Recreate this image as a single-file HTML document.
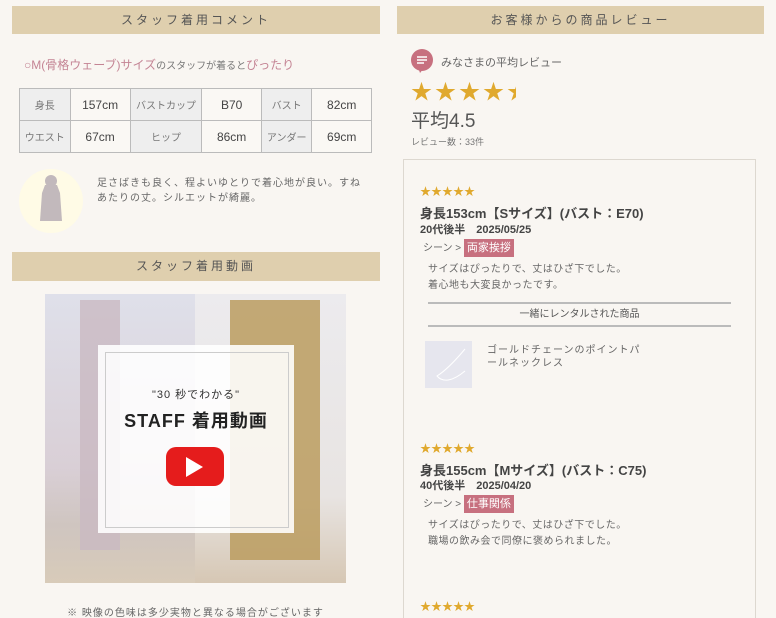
<!DOCTYPE html>
<html style="overflow:hidden;height:618px"><head><meta charset="utf-8"><style>
body{margin:0;width:776px;height:618px;background:#f9f6f2;position:relative;overflow:hidden;font-family:"Liberation Sans","Noto Sans CJK JP",sans-serif;color:#555;}
.a{position:absolute;}
.bar{background:#dfcfae;height:28px;line-height:28px;text-align:center;font-size:12px;letter-spacing:3px;color:#555;}
table{border-collapse:collapse;font-size:10px;}
td{border:1px solid #bbb;text-align:center;height:31px;padding:0;}
td.l{background:#eeeeee;color:#777;width:53px}
td.v{background:#faf8f4;color:#444;width:61px;font-size:12px}
.star{color:#e0a92e}
.tag{background:#c7707f;color:#fff;padding:3px 3px;font-size:11px}
.rt{font-weight:bold;color:#444;font-size:13px}
.sub{font-weight:bold;color:#444;font-size:11px}
.tx{font-size:10px;color:#666;line-height:16px;letter-spacing:.5px}
</style></head><body>
<div class="a bar" style="left:12px;top:6px;width:368px">スタッフ着用コメント</div>
<div class="a bar" style="left:397px;top:6px;width:367px">お客様からの商品レビュー</div>

<div class="a" style="left:24px;top:56px;font-size:12px;color:#c48494">○M(骨格ウェーブ)サイズ<span style="font-size:10px;color:#777">のスタッフが着ると</span>ぴったり</div>
<table class="a" style="left:19px;top:88px;width:353px">
<tr><td class="l">身長</td><td class="v">157cm</td><td class="l" style="width:76px">バストカップ</td><td class="v" style="width:53px">B70</td><td class="l">バスト</td><td class="v" style="width:53px">82cm</td></tr>
<tr><td class="l">ウエスト</td><td class="v">67cm</td><td class="l">ヒップ</td><td class="v">86cm</td><td class="l">アンダー</td><td class="v">69cm</td></tr>
</table>
<div class="a" style="left:19px;top:169px;width:64px;height:64px;border-radius:50%;background:#fffbe6"></div>
<svg class="a" style="left:36px;top:172px" width="30" height="52"><circle cx="15" cy="9" r="6" fill="#c2b9bc"/><path d="M9 13 h12 l3 8 l2 28 h-22 l2-28z" fill="#c2b9bc"/></svg>
<div class="a" style="left:97px;top:176px;width:265px;font-size:10px;color:#666;line-height:15px;letter-spacing:1px">足さばきも良く、程よいゆとりで着心地が良い。すねあたりの丈。シルエットが綺麗。</div>

<div class="a bar" style="left:12px;top:252px;width:368px;height:29px">スタッフ着用動画</div>
<div class="a" style="left:45px;top:294px;width:150px;height:289px;background:linear-gradient(180deg,#dfe0ea,#d9cfd6 60%,#cfc5c0 80%,#d8cbb9)"></div>
<div class="a" style="left:195px;top:294px;width:151px;height:289px;background:linear-gradient(180deg,#ecebee,#e8e4e2 70%,#d6c7b4)"></div>
<div class="a" style="left:230px;top:300px;width:90px;height:260px;background:#bb9c5f;opacity:.85"></div>
<div class="a" style="left:80px;top:300px;width:40px;height:250px;background:#c9b9c2;opacity:.8"></div>
<div class="a" style="left:98px;top:345px;width:196px;height:188px;background:rgba(255,255,255,.88)"></div>
<div class="a" style="left:105px;top:352px;width:182px;height:174px;border:1px solid #ccc"></div>
<div class="a" style="left:98px;top:386px;width:196px;text-align:center;font-size:11px;color:#333;letter-spacing:1px">"30 秒でわかる"</div>
<div class="a" style="left:98px;top:407px;width:196px;text-align:center;font-size:18px;font-weight:bold;color:#222;letter-spacing:1px">STAFF 着用動画</div>
<div class="a" style="left:166px;top:447px;width:58px;height:39px;background:#e51c1c;border-radius:10px"></div>
<svg class="a" style="left:186px;top:457px" width="20" height="20"><path d="M0 0 L17 10 L0 20z" fill="#fff"/></svg>
<div class="a" style="left:45px;top:604px;width:301px;text-align:center;font-size:10px;color:#666;letter-spacing:1px">※ 映像の色味は多少実物と異なる場合がございます</div>

<svg class="a" style="left:410px;top:49px" width="25" height="24"><circle cx="12" cy="11" r="11" fill="#c7707f"/><path d="M8 18 l2 6 l4-5z" fill="#c7707f"/><path d="M7 8h10M7 11h10M7 14h7" stroke="#fff" stroke-width="1.5"/></svg>
<div class="a" style="left:441px;top:54px;font-size:11px;color:#666">みなさまの平均レビュー</div>
<div class="a star" style="left:411px;top:76px;font-size:21px;letter-spacing:3px">★★★★<span style="display:inline-block;width:9px;overflow:hidden;vertical-align:top">★</span></div>
<div class="a" style="left:411px;top:106px;font-size:19px;color:#555">平均4.5</div>
<div class="a" style="left:411px;top:135px;font-size:9px;color:#777">レビュー数：33件</div>

<div class="a" style="left:403px;top:159px;width:351px;height:470px;border:1px solid #ddd8d0;border-bottom:none"></div>
<div class="a star" style="left:420px;top:183px;font-size:11px">★★★★★</div>
<div class="a rt" style="left:420px;top:203px">身長153cm【Sサイズ】(バスト：E70)</div>
<div class="a sub" style="left:420px;top:221px">20代後半　2025/05/25</div>
<div class="a" style="left:423px;top:239px;font-size:10px;color:#666">シーン &gt; <span class="tag">両家挨拶</span></div>
<div class="a tx" style="left:428px;top:262px">サイズはぴったりで、丈はひざ下でした。<br>着心地も大変良かったです。</div>
<div class="a" style="left:428px;top:302px;width:303px;border-top:2px solid #bbb;border-bottom:2px solid #bbb;height:21px;line-height:21px;text-align:center;font-size:10px;color:#555">一緒にレンタルされた商品</div>
<div class="a" style="left:425px;top:341px;width:47px;height:47px;background:#e6e6ee"></div>
<svg class="a" style="left:425px;top:341px" width="47" height="47"><path d="M40 8 C30 20 20 30 12 35 C18 42 28 40 40 30" stroke="#fff" stroke-width="1" fill="none"/></svg>
<div class="a" style="left:487px;top:344px;font-size:10px;color:#666;line-height:13px;letter-spacing:1px;width:160px">ゴールドチェーンのポイントパールネックレス</div>

<div class="a star" style="left:420px;top:440px;font-size:11px">★★★★★</div>
<div class="a rt" style="left:420px;top:460px">身長155cm【Mサイズ】(バスト：C75)</div>
<div class="a sub" style="left:420px;top:477px">40代後半　2025/04/20</div>
<div class="a" style="left:423px;top:495px;font-size:10px;color:#666">シーン &gt; <span class="tag">仕事関係</span></div>
<div class="a tx" style="left:428px;top:518px">サイズはぴったりで、丈はひざ下でした。<br>職場の飲み会で同僚に褒められました。</div>
<div class="a star" style="left:420px;top:598px;font-size:11px">★★★★★</div>
</body></html>
